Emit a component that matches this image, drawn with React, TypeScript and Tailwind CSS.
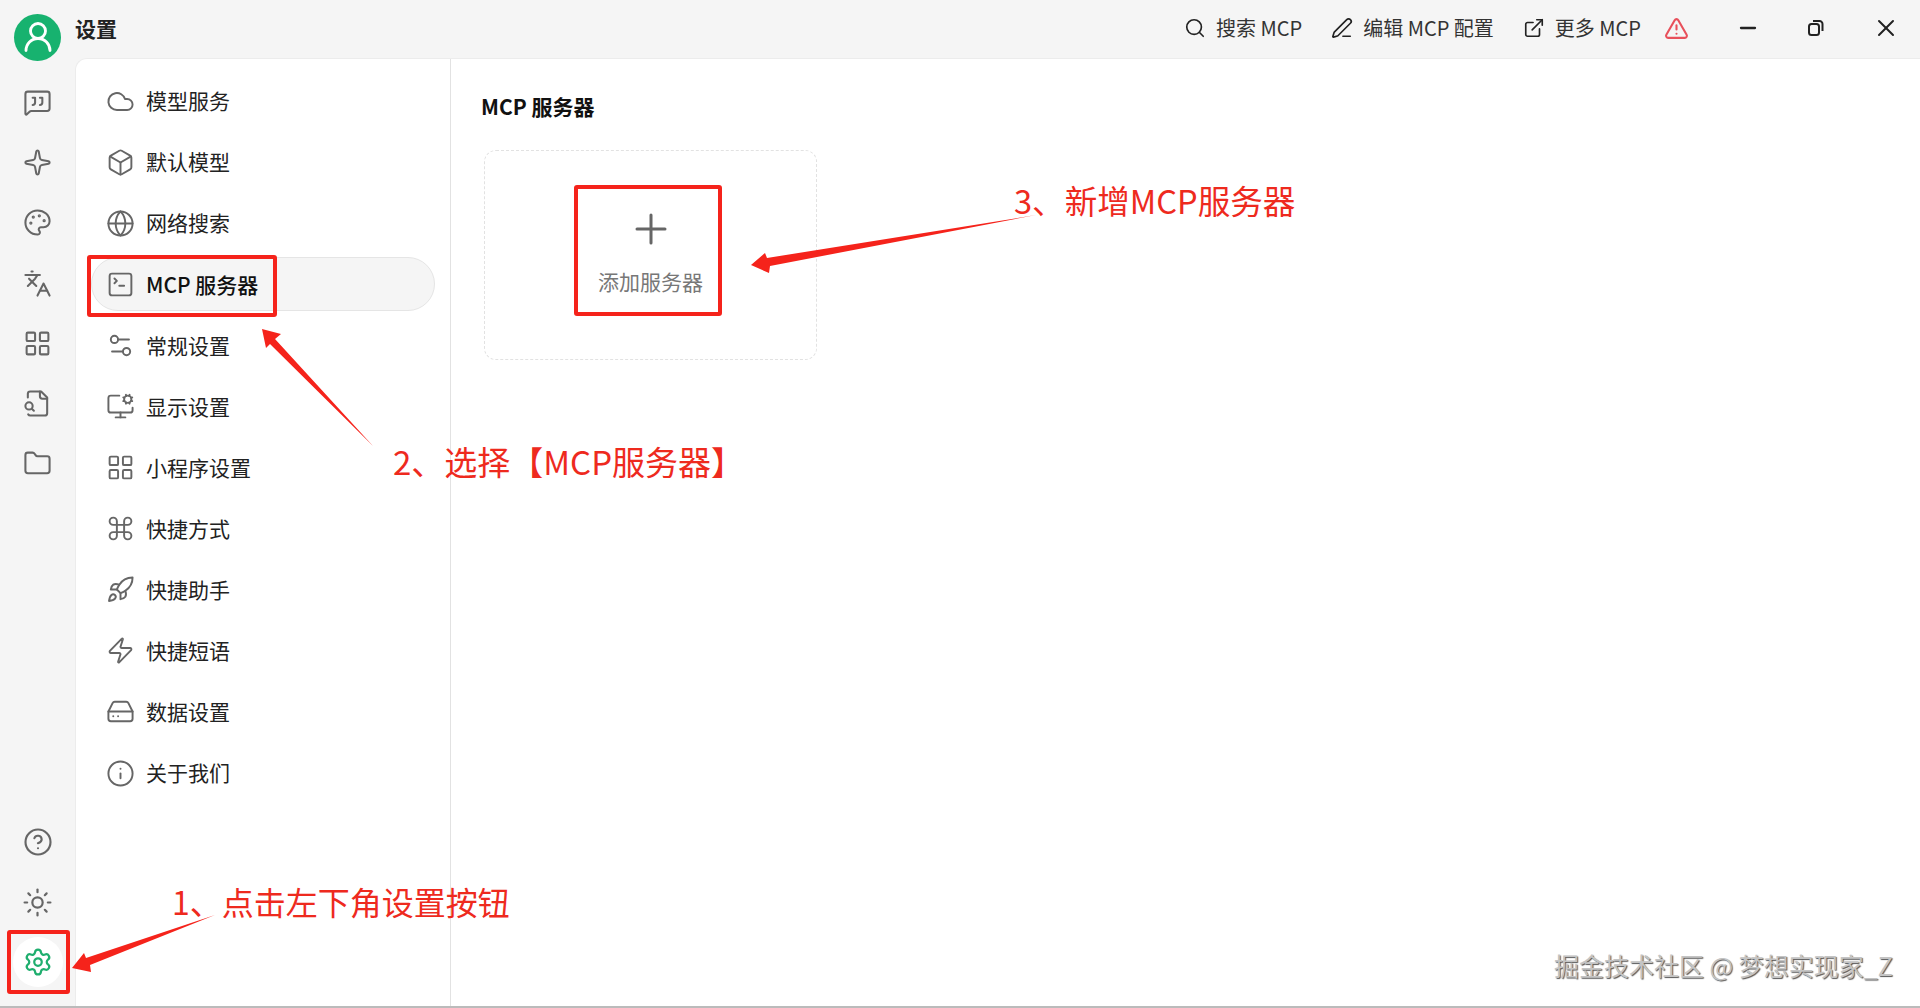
import {
  Box,
  CircleHelp,
  Cloud,
  Command,
  ExternalLink,
  Folder,
  Globe,
  HardDrive,
  Info,
  Languages,
  LayoutGrid,
  MessageSquareQuote,
  Minus,
  MonitorCog,
  Palette,
  PenLine,
  Plus,
  Rocket,
  Search,
  Settings,
  Settings2,
  Sparkle,
  SquareTerminal,
  Sun,
  TriangleAlert,
  UserRound,
  X,
  Zap,
} from 'lucide-react';

const navItems = [
  { label: '模型服务', icon: Cloud },
  { label: '默认模型', icon: Box },
  { label: '网络搜索', icon: Globe },
  { label: 'MCP 服务器', icon: SquareTerminal, active: true },
  { label: '常规设置', icon: Settings2 },
  { label: '显示设置', icon: MonitorCog },
  { label: '小程序设置', icon: LayoutGrid },
  { label: '快捷方式', icon: Command },
  { label: '快捷助手', icon: Rocket },
  { label: '快捷短语', icon: Zap },
  { label: '数据设置', icon: HardDrive },
  { label: '关于我们', icon: Info },
];

const topActions = [
  { label: '搜索 MCP', icon: Search },
  { label: '编辑 MCP 配置', icon: PenLine },
  { label: '更多 MCP', icon: ExternalLink },
];

// file with the magnifier sitting on its lower left edge
function FileLens({ size, strokeWidth }: { size: number; strokeWidth: number }) {
  return (
    <svg width={size} height={size} viewBox="0 0 24 24" fill="none" stroke="currentColor" strokeWidth={strokeWidth} strokeLinecap="round" strokeLinejoin="round">
      <path d="M14 2v4a2 2 0 0 0 2 2h4" />
      <path d="M4.3 21a2 2 0 0 0 1.7 1h12a2 2 0 0 0 2-2V7l-5-5H6a2 2 0 0 0-2 2v3" />
      <circle cx="5" cy="14" r="3" />
      <path d="m9 18-1.5-1.5" />
    </svg>
  );
}

const railTop = [MessageSquareQuote, Sparkle, Palette, Languages, LayoutGrid, FileLens, Folder];

function RestoreIcon() {
  return (
    <svg width="18" height="18" viewBox="0 0 18 18" fill="none" stroke="#222" strokeWidth="2">
      <rect x="2" y="5" width="10" height="11" rx="2.5" />
      <path d="M6 2h6.5A3 3 0 0 1 15.5 5v7" />
    </svg>
  );
}

function Annotations() {
  return (
    <div className="absolute inset-0 pointer-events-none text-[#ee2a1e]">
      <svg className="absolute inset-0" width="1920" height="1008" fill="#f5231b">
        <polygon points="262,329 281,334 275,339 373,446 270,344 266,348" />
        <polygon points="72,968 84,953 86,958 215,915 90,965 91,972" />
        <polygon points="751,265 765,253 767,258 1036,215 770,266 769,273" />
      </svg>
      <div className="absolute left-[87px] top-[255px] w-[190px] h-[62px] border-4 border-[#f5231b] rounded-[3px]" />
      <div className="absolute left-[574px] top-[185px] w-[148px] h-[131px] border-4 border-[#f5231b] rounded-[3px]" />
      <div className="absolute left-[7px] top-[930px] w-[63px] h-[64px] border-4 border-[#f5231b] rounded-[3px]" />
      <div className="absolute left-[172px] top-[881px] text-[32px] leading-[40px] whitespace-nowrap">1、点击左下角设置按钮</div>
      <div className="absolute left-[393px] top-[441px] text-[33px] leading-[40px] whitespace-nowrap">2、选择【MCP服务器】</div>
      <div className="absolute left-[1014px] top-[180px] text-[32.6px] leading-[40px] whitespace-nowrap">3、新增MCP服务器</div>
      <div className="absolute left-[1554px] top-[949px] text-[25px] leading-[32px] whitespace-nowrap text-[#c4c4c4] [text-shadow:1px_1px_1px_#555]">
        掘金技术社区 @ 梦想实现家_Z
      </div>
    </div>
  );
}

export default function App() {
  return (
    <div className="relative w-[1920px] h-[1008px] overflow-hidden flex flex-col bg-[#f5f5f5] text-[#222] font-['Noto_Sans_CJK_SC','Noto_Sans',sans-serif]">
      {/* title bar */}
      <div className="h-[58px] flex items-center shrink-0">
        <div className="w-[47px] h-[47px] ml-[14px] mt-[16px] rounded-full bg-[#17b26f] flex items-center justify-center text-white">
          <UserRound size={36} strokeWidth={1.9} />
        </div>
        <div className="ml-[14px] text-[21px] font-bold">设置</div>
        <div className="ml-auto flex items-center -mt-[2px]">
          {topActions.map((a) => (
            <div key={a.label} className="flex items-center gap-[10px] mr-[29px] text-[20px] text-[#333]">
              <a.icon size={22} strokeWidth={1.8} color="#222" />
              <span>{a.label}</span>
            </div>
          ))}
          <TriangleAlert size={25} strokeWidth={2} color="#e8505b" className="-ml-[6px]" />
          <div className="w-[68px] ml-[25px] flex justify-center">
            <Minus size={24} strokeWidth={2.3} color="#222" />
          </div>
          <div className="w-[68px] flex justify-center">
            <RestoreIcon />
          </div>
          <div className="w-[68px] flex justify-center ml-[2px]">
            <X size={28} strokeWidth={1.7} color="#222" />
          </div>
        </div>
      </div>

      <div className="flex flex-1 min-h-0">
        {/* icon rail */}
        <div className="w-[75px] shrink-0 flex flex-col items-center text-[#666]">
          <div className="flex flex-col items-center gap-[31.2px] pt-[30px]">
            {railTop.map((Icon, i) => (
              <Icon key={i} size={29} strokeWidth={1.7} />
            ))}
          </div>
          <div className="mt-auto flex flex-col items-center">
            <CircleHelp size={30} strokeWidth={1.7} />
            <Sun size={31} strokeWidth={1.7} className="mt-[30px]" />
            <div className="w-[50px] h-[50px] mt-[19px] mb-[19px] rounded-full bg-white flex items-center justify-center">
              <Settings size={30} strokeWidth={1.8} color="#1fae6e" />
            </div>
          </div>
        </div>

        {/* settings panel */}
        <div className="flex-1 flex bg-white rounded-tl-[12px] border-t border-l border-[#ececec]">
          <div className="w-[375px] shrink-0 border-r border-[#e2e2e2] pt-[15px] pl-[15px] pr-[15px] flex flex-col gap-[7.1px]">
            {navItems.map((item) => (
              <div
                key={item.label}
                className={
                  item.active
                    ? 'h-[54px] shrink-0 flex items-center pl-[13.5px] gap-[11.5px] rounded-full bg-[#f5f5f5] border border-[#e5e5e5] font-medium text-[#111] text-[21px]'
                    : 'h-[54px] shrink-0 flex items-center pl-[14.5px] gap-[11.5px] rounded-full text-[#222] text-[21px]'
                }
              >
                <item.icon size={29} strokeWidth={1.6} color="#666" />
                <span>{item.label}</span>
              </div>
            ))}
          </div>
          <div className="flex-1 pl-[30px] pt-[31px]">
            <div className="text-[21px] leading-[32px] font-bold text-[#111]">MCP 服务器</div>
            <div className="ml-[3px] mt-[28px] w-[333px] h-[210px] pb-[9px] rounded-[12px] border border-dashed border-[#e2e2e2] flex flex-col items-center justify-center">
              <Plus size={48} strokeWidth={1.5} color="#666" />
              <div className="mt-[13.5px] text-[21px] leading-[30px] text-[#777]">添加服务器</div>
            </div>
          </div>
        </div>
      </div>

      <div className="h-[2px] shrink-0 bg-[#bbbbbb]" />
      <Annotations />
    </div>
  );
}
